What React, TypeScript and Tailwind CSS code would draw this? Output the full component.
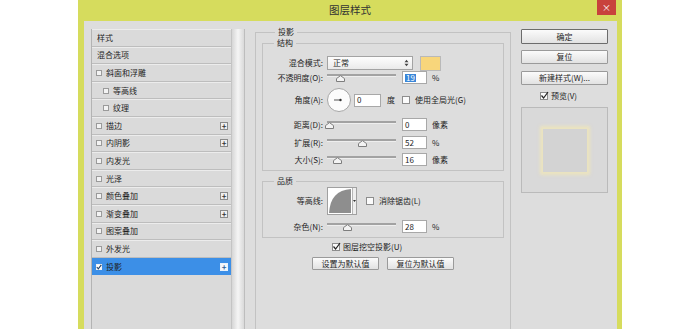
import React from "react";

type Fx = { label: string; box?: boolean; indent?: boolean; plus?: boolean; on?: boolean };

const effects: Fx[] = [
  { label: "样式" },
  { label: "混合选项" },
  { label: "斜面和浮雕", box: true },
  { label: "等高线", box: true, indent: true },
  { label: "纹理", box: true, indent: true },
  { label: "描边", box: true, plus: true },
  { label: "内阴影", box: true, plus: true },
  { label: "内发光", box: true },
  { label: "光泽", box: true },
  { label: "颜色叠加", box: true, plus: true },
  { label: "渐变叠加", box: true, plus: true },
  { label: "图案叠加", box: true },
  { label: "外发光", box: true },
  { label: "投影", box: true, plus: true, on: true },
];

function Tick({ className = "" }: { className?: string }) {
  return (
    <svg className={className} width="9" height="9" viewBox="0 0 9 9">
      <path d="M1.5 4.5L3.6 7L8 1" fill="none" stroke="#222" strokeWidth="1.2" />
    </svg>
  );
}

function Box({ on }: { on?: boolean }) {
  return (
    <span className="relative w-[8px] h-[8px] border border-[#8d8d8d] bg-[#fbfbfb] shrink-0">
      {on && <Tick className="absolute left-[-1px] top-[-2px]" />}
    </span>
  );
}

function Plus({ on }: { on?: boolean }) {
  return (
    <span
      className={`w-[8px] h-[8px] border flex items-center justify-center text-[8px] leading-none font-bold ${
        on ? "border-[#e8f1fb] bg-[#f4f7fb] text-[#2b5f9a]" : "border-[#8a8a8a] bg-[#efefef] text-[#333]"
      }`}
    >
      +
    </span>
  );
}

function FxRow({ fx }: { fx: Fx }) {
  return (
    <div
      className={`h-[17.6px] flex items-center border-b border-t ${
        fx.on ? "bg-[#3c8fe7] border-t-[#3c8fe7] border-b-[#3c8fe7]" : "bg-[#dadada] border-t-[#ececec] border-b-[#bdbdbd]"
      } ${fx.indent ? "pl-[11px]" : "pl-[4px]"} pr-[3px]`}
    >
      {fx.box && (
        <span
          className={`relative w-[6px] h-[6px] border mr-[4px] shrink-0 ${
            fx.on ? "border-[#f2f2f2] bg-white" : "border-[#9a9a9a] bg-[#f3f3f3]"
          }`}
        >
          {fx.on && (
            <svg className="absolute left-[-1px] top-[-1px]" width="6" height="6" viewBox="0 0 6 6">
              <path d="M0.8 3L2.3 4.8L5.3 0.8" fill="none" stroke="#1d3e66" strokeWidth="1.1" />
            </svg>
          )}
        </span>
      )}
      <span className={fx.box ? "" : "pl-[1px]"}>{fx.label}</span>
      {fx.plus && (
        <span className="ml-auto">
          <Plus on={fx.on} />
        </span>
      )}
    </div>
  );
}

function Slider({ thumb }: { thumb: string }) {
  return (
    <div className="relative w-[69px] h-[13px]">
      <div className="absolute left-0 right-0 top-[3px] h-[3px] bg-[#a2a2a2] border-b border-[#eeeeee]" />
      <svg className={`absolute top-[4px] ${thumb}`} width="9" height="7" viewBox="0 0 9 7">
        <path d="M0.5 6.5V3.6L4.5 0.6L8.5 3.6V6.5Z" fill="#f3f3f3" stroke="#7d7d7d" />
      </svg>
    </div>
  );
}

function Num({ v, sel, w = "w-[25px]" }: { v: string; sel?: boolean; w?: string }) {
  return (
    <div className={`${w} h-[13px] border border-[#a8a8a8] bg-white pl-[2px] flex items-center`}>
      <span className={sel ? "bg-[#3a86d8] text-white px-[1px]" : ""}>{v}</span>
    </div>
  );
}

function Row({ label, className = "", children }: { label: string; className?: string; children: React.ReactNode }) {
  return (
    <div className={`flex items-center ${className}`}>
      <span className="w-[60px] text-right whitespace-nowrap">{label}</span>
      <div className="ml-[4px] flex items-center">{children}</div>
    </div>
  );
}

function Btn({ children, className = "" }: { children: React.ReactNode; className?: string }) {
  return (
    <div
      className={`flex items-center justify-center border rounded-[1px] bg-linear-to-b from-[#fbfbfb] to-[#e2e2e2] ${className}`}
    >
      {children}
    </div>
  );
}

function SliderRow({ label, thumb, v, unit, className }: { label: string; thumb: string; v: string; unit: string; className: string }) {
  return (
    <Row label={label} className={`h-[13px] ${className}`}>
      <Slider thumb={thumb} />
      <div className="ml-[6px]">
        <Num v={v} />
      </div>
      <span className="ml-[5px]">{unit}</span>
    </Row>
  );
}

export default function App() {
  return (
    <div className="w-[690px] h-[329px] bg-white overflow-hidden text-[8px] leading-none text-[#1e1e1e] font-['Noto_Sans_CJK_SC','Noto_Sans',sans-serif]">
      <div className="ml-[78px] w-[544px] h-[329px] bg-[#d6dc5d] flex flex-col">
        <div className="relative h-[21px] shrink-0 flex items-center justify-center text-[10.5px] text-[#333]">
          图层样式
          <div className="absolute right-[6px] top-0 w-[19px] h-[15px] bg-[#c8423c] flex items-center justify-center text-white text-[9px]">
            ×
          </div>
        </div>
        <div className="flex-1 ml-[6px] mr-[5px] bg-[#dddddd] flex items-start">
          {/* effects list */}
          <div className="ml-[7px] mt-[8px] w-[154px] h-[310px] flex border-l border-[#b3b3b3] bg-[#dadada]">
            <div className="w-[140px] border-r border-[#c4c4c4]">
              {effects.map((fx) => (
                <FxRow key={fx.label} fx={fx} />
              ))}
            </div>
            <div className="flex-1 border-r border-[#bdbdbd] bg-linear-to-r from-[#d6d6d6] via-[#f5f5f5] to-[#d9d9d9]" />
          </div>

          {/* drop shadow settings */}
          <fieldset className="ml-[10px] mt-[6px] w-[256px] h-[320px] border border-[#c2c2c2] px-[6px]">
            <legend className="ml-[13px] px-[3px] leading-[10px]">投影</legend>
            <fieldset className="mt-[1px] border border-[#c2c2c2] pb-[4px]">
              <legend className="ml-[11px] px-[3px] leading-[10px]">结构</legend>
              <Row label="混合模式:" className="mt-[8px] h-[14px]">
                <div className="w-[86px] h-[14px] border border-[#a3a3a3] bg-linear-to-b from-[#fdfdfd] to-[#eaeaea] flex items-center pl-[5px] pr-[3px]">
                  正常
                  <svg className="ml-auto" width="5" height="8" viewBox="0 0 5 8">
                    <path d="M0.5 3.2L2.5 0.8L4.5 3.2ZM0.5 4.8L2.5 7.2L4.5 4.8Z" fill="#444" />
                  </svg>
                </div>
                <div className="ml-[7px] w-[21px] h-[15px] border border-[#b9b9b9] bg-[#f8d67b]" />
              </Row>
              <Row label="不透明度(O):" className="mt-[1px] h-[13px]">
                <Slider thumb="left-[9px]" />
                <div className="ml-[6px]">
                  <Num v="19" sel />
                </div>
                <span className="ml-[5px]">%</span>
              </Row>
              <Row label="角度(A):" className="mt-[4px] h-[24px]">
                <svg width="24" height="24" viewBox="0 0 24 24">
                  <circle cx="12" cy="12" r="11.5" fill="#fcfcfc" stroke="#a5a5a5" />
                  <path d="M7 12H13" stroke="#555" strokeWidth="1" />
                  <circle cx="13.5" cy="12" r="1.2" fill="#333" />
                </svg>
                <div className="ml-[3px]">
                  <Num v="0" w="w-[27px]" />
                </div>
                <span className="ml-[6px]">度</span>
                <span className="ml-[7px] flex items-center">
                  <Box />
                </span>
                <span className="ml-[5px] whitespace-nowrap">使用全局光(G)</span>
              </Row>
              <SliderRow label="距离(D):" thumb="left-[-2px]" v="0" unit="像素" className="mt-[6px]" />
              <SliderRow label="扩展(R):" thumb="left-[31px]" v="52" unit="%" className="mt-[5px]" />
              <SliderRow label="大小(S):" thumb="left-[6px]" v="16" unit="像素" className="mt-[4px]" />
            </fieldset>

            <fieldset className="mt-[5px] border border-[#c2c2c2] pb-[4px]">
              <legend className="ml-[11px] px-[3px] leading-[10px]">品质</legend>
              <Row label="等高线:" className="mt-[1px] h-[28px]">
                <div className="flex h-[28px] border border-[#a0a0a0] bg-white">
                  <svg width="24" height="26" viewBox="0 0 24 26">
                    <path d="M1 25C2 10 9 2 23 1V25Z" fill="#8e8e8e" />
                  </svg>
                  <div className="w-[4px] border-l border-[#b5b5b5] bg-[#eeeeee] flex items-center justify-center">
                    <svg width="3" height="2" viewBox="0 0 3 2">
                      <path d="M0 0H3L1.5 2Z" fill="#333" />
                    </svg>
                  </div>
                </div>
                <span className="ml-[9px] flex items-center">
                  <Box />
                </span>
                <span className="ml-[5px] whitespace-nowrap">消除锯齿(L)</span>
              </Row>
              <SliderRow label="杂色(N):" thumb="left-[16px]" v="28" unit="%" className="mt-[5px]" />
            </fieldset>

            <div className="mt-[4px] h-[10px] flex items-center pl-[70px]">
              <span className="relative w-[8px] h-[8px] border border-[#8d8d8d] bg-[#fbfbfb]">
                <Tick className="absolute left-[-1px] top-[-2px]" />
              </span>
              <span className="ml-[3px]">图层挖空投影(U)</span>
            </div>
            <div className="mt-[5px] flex pl-[50px] gap-[8px]">
              <Btn className="w-[67px] h-[13px] border-[#9a9a9a]">设置为默认值</Btn>
              <Btn className="w-[67px] h-[13px] border-[#9a9a9a]">复位为默认值</Btn>
            </div>
          </fieldset>

          {/* buttons + preview */}
          <div className="ml-[10px] mt-[8px] w-[87px] flex flex-col">
            <Btn className="h-[15px] border-[#6c6c6c]">确定</Btn>
            <Btn className="mt-[6px] h-[14px] border-[#9a9a9a]">复位</Btn>
            <Btn className="mt-[7px] h-[14px] border-[#9a9a9a]">新建样式(W)...</Btn>
            <div className="mt-[6px] h-[10px] flex items-center pl-[19px]">
              <Box on />
              <span className="ml-[3px]">预览(V)</span>
            </div>
            <div className="mt-[6px] h-[86px] border border-[#bababa] bg-[#d9d9d9] flex items-center justify-center">
              <div className="w-[44px] h-[43px] bg-[#d3d3d3] shadow-[0_0_3px_3px_rgba(244,232,180,0.7)]" />
            </div>
          </div>
        </div>
      </div>
    </div>
  );
}
